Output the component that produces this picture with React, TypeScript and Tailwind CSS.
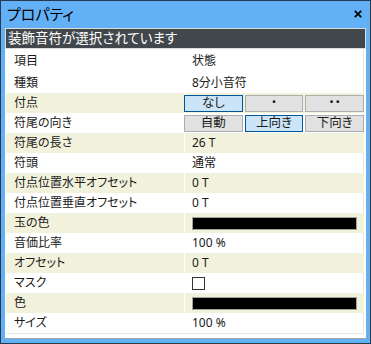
import React from 'react'

type Row = {
  label: string
  kind: 'text' | 'buttons' | 'color' | 'check'
  value?: string
  options?: string[]
  selected?: number
}

const rows: Row[] = [
  { label: '付点', kind: 'buttons', options: ['なし', '・', '・・'], selected: 0 },
  { label: '符尾の向き', kind: 'buttons', options: ['自動', '上向き', '下向き'], selected: 1 },
  { label: '符尾の長さ', kind: 'text', value: '26 T' },
  { label: '符頭', kind: 'text', value: '通常' },
  { label: '付点位置水平オフセット', kind: 'text', value: '0 T' },
  { label: '付点位置垂直オフセット', kind: 'text', value: '0 T' },
  { label: '玉の色', kind: 'color' },
  { label: '音価比率', kind: 'text', value: '100 %' },
  { label: 'オフセット', kind: 'text', value: '0 T' },
  { label: 'マスク', kind: 'check' },
  { label: '色', kind: 'color' },
  { label: 'サイズ', kind: 'text', value: '100 %' },
]

function Value({ row }: { row: Row }) {
  if (row.kind === 'buttons') {
    return (
      <div className="grid grid-cols-3 gap-[2px] pt-[2px] pb-[1px] -ml-[1px] h-full">
        {row.options!.map((o, i) => (
          <div
            key={o}
            className={
              i === row.selected
                ? 'flex items-center justify-center border border-[#005499] bg-[#cce4f7] text-[12.5px] leading-none'
                : 'flex items-center justify-center border border-[#adadad] bg-[#e1e1e1] text-[12.5px] leading-none'
            }
          >
            {o}
          </div>
        ))}
      </div>
    )
  }
  if (row.kind === 'color') {
    return (
      <div className="flex items-center h-full pl-[7px] pr-[7px]">
        <div className="h-[13px] w-full border border-[#a0a0a0] bg-black" />
      </div>
    )
  }
  if (row.kind === 'check') {
    return (
      <div className="flex items-center h-full pl-[7px]">
        <div className="w-[13px] h-[13px] border border-[#333333] bg-white" />
      </div>
    )
  }
  return <div className="flex items-center h-full pl-[7px]">{row.value}</div>
}

export default function App() {
  return (
    <div
      className="w-[371px] h-[344px] border border-[#27394b] bg-[#62b1f6] flex flex-col px-[4px] pb-[4px] text-[#1a1a1a] [font-feature-settings:'palt']"
      style={{ fontFamily: '"Noto Sans", "Noto Sans CJK JP", sans-serif' }}
    >
      <div className="h-[27px] flex items-center justify-between pl-[2px] pr-[4px]">
        <span className="text-[15px] text-black">プロパティ</span>
        <svg width="8" height="8" viewBox="0 0 8 8" className="mb-[1px]">
          <path d="M0.8 0.8L7.2 7.2M7.2 0.8L0.8 7.2" stroke="#000" strokeWidth="1.8" />
        </svg>
      </div>

      <div className="h-[21px] border border-[#dcdcdc] bg-[#42474b] text-white text-[13.5px] leading-none flex items-center pl-[2px]">
        装飾音符が選択されています
      </div>

      <div className="flex-1 bg-white border-b border-[#a6a6a6] pl-[1px] pr-[2px] text-[12px] leading-none">
        <div className="border-r border-b border-[#e6e6e6] w-[358px]">
          <div className="grid grid-cols-[178px_179px] gap-x-[1px] h-[24px]">
            <div className="flex items-center pl-[8px]">項目</div>
            <div className="flex items-center pl-[7px]">状態</div>
          </div>
          <div className="grid grid-cols-[178px_179px] gap-x-[1px] h-[20px]">
            <div className="flex items-center pl-[8px]">種類</div>
            <div className="flex items-center pl-[7px]">8分小音符</div>
          </div>
          {rows.map((r, i) => (
            <div key={r.label} className="grid grid-cols-[178px_179px] gap-x-[1px] h-[20px]">
              <div className={i % 2 === 0 ? 'flex items-center pl-[8px] bg-[#f2f2dc]' : 'flex items-center pl-[8px]'}>
                {r.label}
              </div>
              <div className={i % 2 === 0 ? 'bg-[#f2f2dc]' : ''}>
                <Value row={r} />
              </div>
            </div>
          ))}
        </div>
      </div>
    </div>
  )
}
